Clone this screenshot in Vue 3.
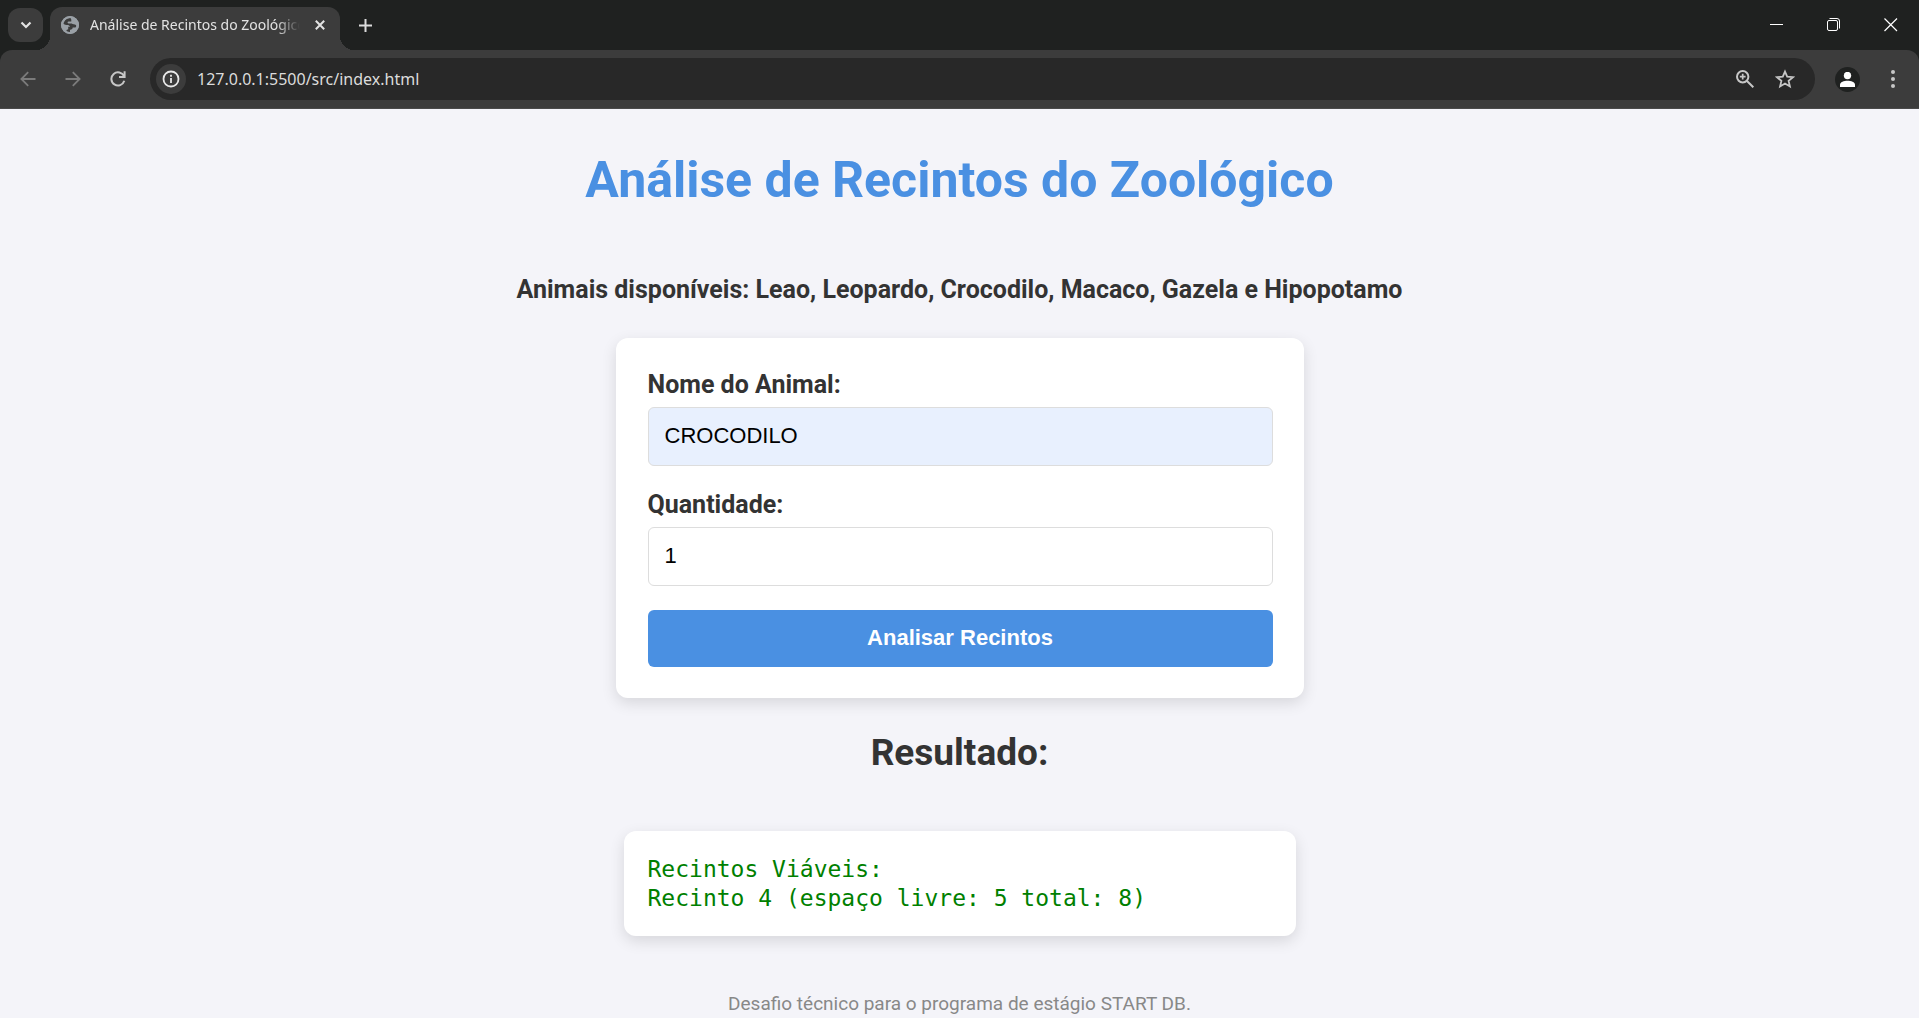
<script setup>
import { ref } from 'vue'

const animais = ['Leao', 'Leopardo', 'Crocodilo', 'Macaco', 'Gazela']
const animal = ref('CROCODILO')
const quantidade = ref('1')
const endereco = ref('127.0.0.1:5500/src/index.html')
const resultado = ref('Recintos Viáveis:\nRecinto 4 (espaço livre: 5 total: 8)')
</script>

<template>
  <div class="window">
    <header class="chrome">
      <div class="tabstrip">
        <button class="tab-search" type="button" aria-label="Pesquisar guias">
          <svg width="12" height="8" viewBox="0 0 12 8"><path d="M1.5 1.5 6 6l4.500-4.500" fill="none" stroke="#e3e3e3" stroke-width="2.200" /></svg>
        </button>
        <div class="tab">
          <svg class="globe" width="18" height="18" viewBox="0 0 18 18">
            <circle cx="9" cy="9" r="9" fill="#9aa0a6" />
            <path d="M9.500 2c-2.500 0-4.500 1-5.500 2.500L2.200 7.200c.8 1.300 2 1.800 3.600 1.700 1.600-.1 2.900.4 3.200 1.800H7.200v2.600l-1.700.6v1.700c1 .5 2.200.8 3.500.8v-2.700c1.600.1 2.600-.5 2.700-2.100h2c.8 0 1.400-.6 1.500-1.600.1-.8-.5-1.400-1.400-1.600l-2.200-.5c-.8-.4-1.500-.5-2.700-.4-1.500.1-2.300-.3-2.300-1.100 0-.7.6-1 1.500-1h2.200V4.100c0-.8-.3-1.400-.8-2.100z" fill="#3c3c3c" />
            <circle cx="9" cy="9" r="8" fill="none" stroke="#9aa0a6" stroke-width="2" />
          </svg>
          <span class="tab-title">Análise de Recintos do Zoológico</span>
          <button class="icon-btn tab-close" type="button" aria-label="Fechar guia">
            <svg width="10" height="10" viewBox="0 0 10 10"><path d="M.8.8 9.200 9.200M9.200.8.8 9.200" stroke="#e3e3e3" stroke-width="2" /></svg>
          </button>
        </div>
        <button class="icon-btn new-tab" type="button" aria-label="Nova guia">
          <svg width="13" height="13" viewBox="0 0 13 13"><path d="M6.500 0v13M0 6.500h13" stroke="#dcdcdc" stroke-width="2" /></svg>
        </button>
        <div class="win-controls">
          <button class="icon-btn win-btn" type="button" aria-label="Minimizar">
            <svg width="14" height="14" viewBox="0 0 14 14"><path d="M0 6.500h13" stroke="#fff" /></svg>
          </button>
          <button class="icon-btn win-btn" type="button" aria-label="Restaurar">
            <svg width="14" height="14" viewBox="0 0 14 14" fill="none" stroke="#fff"><rect x=".5" y="2.500" width="10" height="10" rx="1.500" /><path d="M2.500.5h7.500a2.500 2.500 0 0 1 2.500 2.500v7.500" /></svg>
          </button>
          <button class="icon-btn win-btn" type="button" aria-label="Fechar">
            <svg width="14" height="14" viewBox="0 0 14 14"><path d="M.5.5l12.500 12.500M13 .5.5 13" stroke="#fff" stroke-width="1.200" /></svg>
          </button>
        </div>
      </div>

      <div class="toolbar">
        <button class="icon-btn nav-btn" type="button" aria-label="Voltar">
          <svg width="16" height="16" viewBox="0 0 16 16" fill="none" stroke="#7b7b7b" stroke-width="1.800"><path d="M15.500 8H2M8.200 1.200 1.400 8l6.800 6.800" /></svg>
        </button>
        <button class="icon-btn nav-btn" type="button" aria-label="Avançar">
          <svg width="16" height="16" viewBox="0 0 16 16" fill="none" stroke="#7b7b7b" stroke-width="1.800"><path d="M.5 8H14M7.800 1.200 14.600 8l-6.800 6.800" /></svg>
        </button>
        <button class="icon-btn nav-btn" type="button" aria-label="Recarregar">
          <svg width="16" height="16" viewBox="0 0 16 16" fill="none" stroke="#c7c7c7" stroke-width="2"><path d="M14.300 9.800A6.600 6.600 0 1 1 14 5.200M14.600.3v5.600H9" /></svg>
        </button>
        <div class="omnibox">
          <button class="icon-btn site-info" type="button" aria-label="Informações do site">
            <svg width="18" height="18" viewBox="0 0 18 18" fill="none" stroke="#e8e8e8" stroke-width="1.800"><circle cx="9" cy="9" r="7.500" /><path d="M9 8v5M9 4.800v2" /></svg>
          </button>
          <div class="url">
            <input v-model="endereco" type="text" aria-label="Barra de endereço" spellcheck="false" />
          </div>
          <button class="icon-btn box-btn" type="button" aria-label="Zoom">
            <svg width="18" height="18" viewBox="0 0 18 18" fill="none" stroke="#c7c7c7" stroke-width="2"><circle cx="6.700" cy="6.700" r="5.700" /><path d="M11 11l6.300 6.300" /><path d="M6.700 3.800v5.800M3.800 6.700h5.800" stroke-width="1.700" /></svg>
          </button>
          <button class="icon-btn box-btn" type="button" aria-label="Adicionar aos favoritos">
            <svg width="20" height="20" viewBox="0 0 20 20" fill="none" stroke="#c7c7c7" stroke-width="1.800"><path d="M10 2.600l2.200 5.100 5.800.5-4.400 3.700 1.300 5.500-4.900-2.900-4.900 2.900 1.300-5.500L2 8.200l5.800-.5z" /></svg>
          </button>
        </div>
        <button class="icon-btn avatar" type="button" aria-label="Perfil">
          <svg width="15" height="15" viewBox="0 0 15 15" fill="#fff"><circle cx="7.500" cy="3.500" r="3.700" /><path d="M0 15v-2.500C0 10 4 8.700 7.500 8.700S15 10 15 12.500V15z" /></svg>
        </button>
        <button class="icon-btn menu" type="button" aria-label="Menu">
          <svg width="4" height="18" viewBox="0 0 4 18" fill="#c7c7c7"><circle cx="2" cy="2" r="2" /><circle cx="2" cy="9" r="2" /><circle cx="2" cy="16" r="2" /></svg>
        </button>
      </div>
    </header>

    <main class="page">
      <h1>Análise de Recintos do Zoológico</h1>
      <h3>Animais disponíveis: {{ animais.join(', ') }} e Hipopotamo</h3>

      <form class="card form" @submit.prevent>
        <label for="animal">Nome do Animal:</label>
        <input id="animal" v-model="animal" class="autofilled" type="text" />
        <label for="quantidade">Quantidade:</label>
        <input id="quantidade" v-model="quantidade" type="text" inputmode="numeric" />
        <button class="submit" type="submit">Analisar Recintos</button>
      </form>

      <h2>Resultado:</h2>
      <pre class="card result">{{ resultado }}</pre>
      <footer>Desafio técnico para o programa de estágio START DB.</footer>
    </main>
  </div>
</template>

<style>
body {
  margin: 0;
  background: #f4f4f9;
}
</style>

<style scoped>
* {
  box-sizing: border-box;
}

.window {
  color: #333;
  font-family: Roboto, sans-serif;
}

.chrome {
  background: #1f2120;
  font-family: 'Noto Sans', 'Open Sans', sans-serif;
}

svg {
  display: block;
}

.icon-btn {
  display: flex;
  align-items: center;
  justify-content: center;
  flex: none;
  padding: 0;
  border: 0;
  background: none;
}

.tabstrip {
  display: flex;
  height: 50px;
  padding-left: 8px;
}

.tab-search {
  display: flex;
  align-items: center;
  justify-content: center;
  width: 35px;
  height: 34px;
  margin: 8px 7px 0 0;
  padding: 0;
  border: 0;
  border-radius: 12px;
  background: #3c3c3c;
}

.tab {
  position: relative;
  display: flex;
  align-items: center;
  width: 290px;
  height: 43px;
  margin-top: 7px;
  padding: 0 10px 7px 11px;
  border-radius: 12px 12px 0 0;
  background: #3c3c3c;
}

.tab::before,
.tab::after {
  content: '';
  position: absolute;
  bottom: 0;
  width: 14px;
  height: 14px;
}

.tab::before {
  right: 100%;
  background: radial-gradient(circle at 0 0, transparent 14px, #3c3c3c 14px);
}

.tab::after {
  left: 100%;
  background: radial-gradient(circle at 100% 0, transparent 14px, #3c3c3c 14px);
}

.globe {
  flex: none;
}

.tab-title {
  flex: 1;
  margin-left: 11px;
  overflow: hidden;
  color: #e3e3e3;
  font-size: 14px;
  line-height: 24px;
  white-space: nowrap;
  mask-image: linear-gradient(to left, transparent, #000 24px);
}

.tab-close {
  width: 20px;
  height: 20px;
  margin-left: 10px;
}

.new-tab {
  width: 36px;
  height: 36px;
  margin: 7px 0 0 7px;
}

.win-controls {
  display: flex;
  margin-left: auto;
}

.win-btn {
  width: 57px;
  height: 50px;
}

.toolbar {
  display: flex;
  align-items: center;
  height: 59px;
  padding: 0 13px 0 5px;
  border-radius: 12px 12px 0 0;
  border-bottom: 1px solid #4a4a4a;
  background: #3c3c3c;
}

.nav-btn {
  width: 45px;
  height: 42px;
}

.omnibox {
  display: flex;
  flex: 1;
  align-items: center;
  height: 42px;
  margin-left: 10px;
  padding: 0 10px 0 6px;
  border-radius: 21px;
  background: #282828;
}

.site-info {
  width: 30px;
  height: 30px;
  border-radius: 50%;
  background: #3c3c3c;
}

.url {
  flex: 1;
  margin-left: 11px;
}

.url input {
  width: 100%;
  padding: 0;
  border: 0;
  outline: 0;
  background: none;
  color: #dcdcdc;
  font: 16px/24px 'Noto Sans', 'Open Sans', sans-serif;
}

.box-btn {
  width: 40px;
  height: 40px;
}

.avatar {
  width: 25px;
  height: 25px;
  margin-left: 20px;
  border-radius: 50%;
  background: #1f2120;
}

.menu {
  width: 26px;
  height: 30px;
  margin-left: 20px;
}

.page {
  display: flex;
  flex-direction: column;
  align-items: center;
  padding: 41px 20px 0;
}

h1 {
  margin: 0;
  color: #4a90e2;
  font-size: 50px;
  line-height: 60px;
  text-align: center;
}

h3 {
  margin: 65px 0 33px;
  font-size: 25px;
  line-height: 30px;
  text-align: center;
}

.card {
  width: 100%;
  border-radius: 12px;
  background: #fff;
  box-shadow: 0 5px 15px rgba(0, 0, 0, 0.12);
}

.form {
  display: flex;
  flex-direction: column;
  max-width: 688px;
  padding: 32px 31px 31px 32px;
}

label {
  margin-bottom: 7px;
  font-size: 25px;
  font-weight: 700;
  line-height: 30px;
}

.form input {
  width: 100%;
  height: 59px;
  margin-bottom: 24px;
  padding: 0 16px 2px;
  border: 1px solid #ddd;
  border-radius: 6px;
  background: #fff;
  color: #000;
  font: 22px 'Liberation Sans', Arial, sans-serif;
}

.form .autofilled {
  background: #e8f0fe;
}

.submit {
  height: 57px;
  padding: 0 0 2px;
  border: 0;
  border-radius: 6px;
  background: #4a90e2;
  color: #fff;
  font: bold 22px 'Liberation Sans', Arial, sans-serif;
}

h2 {
  margin: 32px 0 55px;
  font-size: 37px;
  line-height: 46px;
}

.result {
  max-width: 672px;
  margin: 0;
  padding: 24px 24px 23px;
  color: #008000;
  font: 23px/29px 'DejaVu Sans Mono', monospace;
  white-space: pre-wrap;
}

footer {
  margin-top: 56px;
  color: #888;
  font-size: 19px;
  line-height: 24px;
}
</style>
